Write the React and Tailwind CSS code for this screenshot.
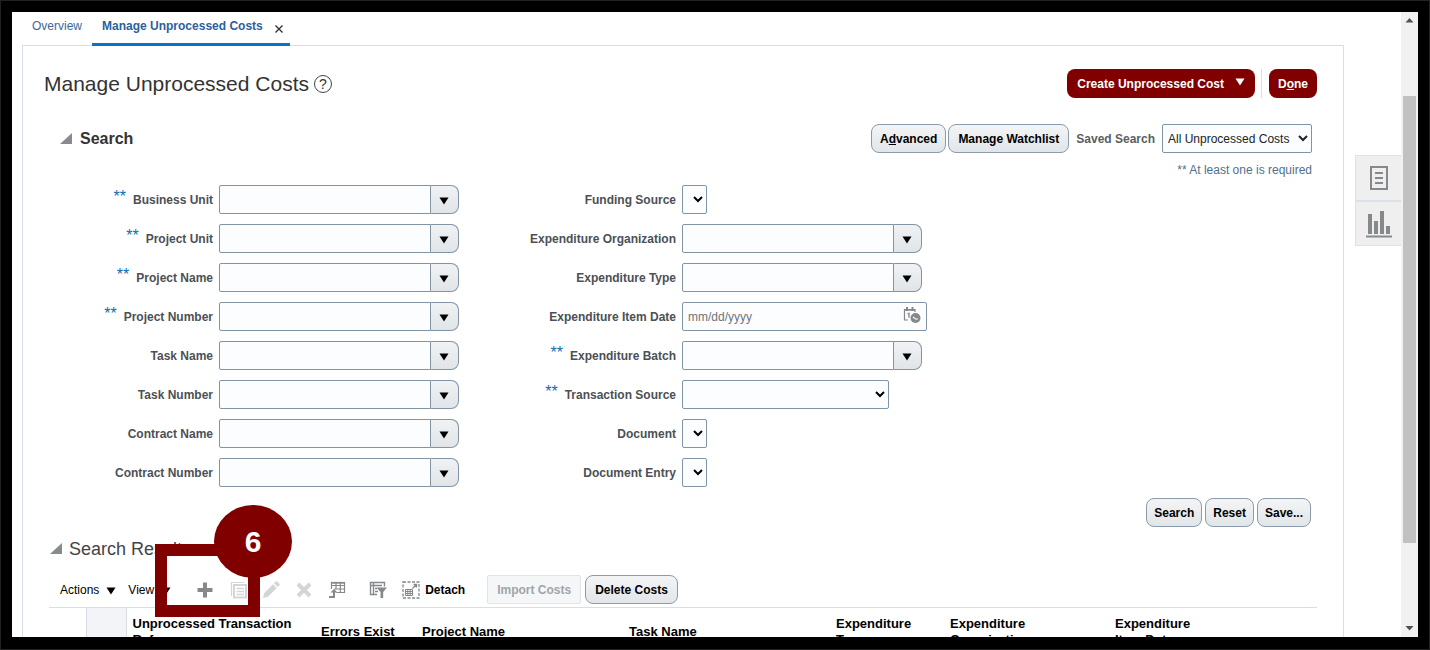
import React, { useState } from 'react';

const primaryFields = [
  { id: 'business-unit', label: 'Business Unit', required: true },
  { id: 'project-unit', label: 'Project Unit', required: true },
  { id: 'project-name', label: 'Project Name', required: true },
  { id: 'project-number', label: 'Project Number', required: true },
  { id: 'task-name', label: 'Task Name' },
  { id: 'task-number', label: 'Task Number' },
  { id: 'contract-name', label: 'Contract Name' },
  { id: 'contract-number', label: 'Contract Number' },
];

const secondaryFields = [
  { id: 'funding-source', label: 'Funding Source', type: 'select' },
  { id: 'expenditure-organization', label: 'Expenditure Organization' },
  { id: 'expenditure-type', label: 'Expenditure Type' },
  { id: 'expenditure-item-date', label: 'Expenditure Item Date', type: 'date' },
  { id: 'expenditure-batch', label: 'Expenditure Batch', required: true },
  { id: 'transaction-source', label: 'Transaction Source', type: 'wide-select', required: true },
  { id: 'document', label: 'Document', type: 'select' },
  { id: 'document-entry', label: 'Document Entry', type: 'select' },
];

const TriangleDown = ({ className = '' }) => (
  <svg viewBox="0 0 10 8" className={`h-2 w-[10px] shrink-0 ${className}`} fill="currentColor" aria-hidden="true">
    <path d="M0.5 0.5h9L5 7.5z" />
  </svg>
);

const DisclosureIcon = () => (
  <svg viewBox="0 0 12 12" className="h-3 w-3 shrink-0" fill="#878b8f" aria-hidden="true">
    <path d="M12 0v11H0z" />
  </svg>
);

const Button = ({ children, className = 'px-2', ...props }) => (
  <button
    type="button"
    className={`h-[29px] rounded-[8px] border border-[#8a9cab] bg-linear-to-b from-[#f3f4f5] to-[#e2e6e9] font-bold whitespace-nowrap text-black ${className}`}
    {...props}
  >
    {children}
  </button>
);

const Combo = ({ id, label }) => (
  <div className="flex h-[29px] w-[240px]">
    <input id={id} type="text" className="min-w-0 flex-1 rounded-l-[2px] border border-[#8094a5] bg-[#fbfdff] px-[5px]" />
    <button
      type="button"
      aria-label={`Open ${label}`}
      className="flex w-7 items-center justify-center rounded-r-[8px] border border-l-0 border-[#8094a5] bg-linear-to-b from-[#f0f2f4] to-[#e1e5e8] pt-[2px] pr-[2px] text-black"
    >
      <TriangleDown />
    </button>
  </div>
);

const DateField = ({ id }) => (
  <div className="flex h-[29px] w-[245px] items-center rounded-[2px] border border-[#8094a5] bg-[#fbfdff] px-[5px]">
    <input id={id} type="text" placeholder="mm/dd/yyyy" className="min-w-0 flex-1 bg-transparent placeholder:text-[#6f757a]" />
    <button type="button" aria-label="Select date" className="shrink-0 pb-[3px]">
      <svg viewBox="0 0 18 18" className="h-[18px] w-[18px]" fill="none" stroke="#85898c">
        <path d="M5 14H1.5V3.5H12V6" strokeWidth="1.2" />
        <path d="M4 1v4M9.500 1v4" strokeWidth="2" />
        <path d="M1.500 4h10.500" strokeWidth="1.500" />
        <path d="M4.500 8l1.500-.7v4.500" strokeWidth="1.300" />
        <circle cx="12.500" cy="12" r="5" fill="#85898c" stroke="none" />
        <path d="M10 11l2.500 2h2.500" stroke="#fff" strokeWidth="1.100" />
      </svg>
    </button>
  </div>
);

const Field = ({ field, labelWidth }) => {
  const { id, label, type, required } = field;
  return (
    <div className="flex items-center gap-[6px]">
      <label htmlFor={id} className={`${labelWidth} shrink-0 text-right leading-5 font-bold whitespace-nowrap text-[#4c5055]`}>
        {required && <span className="mr-[7px] align-[2px] text-base leading-none font-normal text-[#0f6bb3]">**</span>}
        {label}
      </label>
      {!type && <Combo id={id} label={label} />}
      {type === 'date' && <DateField id={id} />}
      {type === 'select' && (
        <select id={id} className="h-[29px] w-[25px] rounded-[2px] border border-[#8094a5] bg-[#fbfdff]">
          <option></option>
        </select>
      )}
      {type === 'wide-select' && (
        <select id={id} className="h-[29px] w-[207px] rounded-[2px] border border-[#8094a5] bg-[#fbfdff]">
          <option></option>
        </select>
      )}
    </div>
  );
};

const IconButton = ({ label, children, className = '', ...props }) => (
  <button type="button" aria-label={label} className={`h-[18px] w-[18px] shrink-0 ${className}`} {...props}>
    <svg viewBox="0 0 18 18" className="h-[18px] w-[18px]" fill="none" stroke="currentColor">
      {children}
    </svg>
  </button>
);

const Toolbar = () => (
  <div className="flex h-[29px] items-center pl-[11px] text-[#85898c]">
    <button type="button" className="flex items-center gap-[7px] text-black">
      Actions
      <TriangleDown className="mt-[2px]" />
    </button>
    <button type="button" className="ml-3 flex items-center gap-[7px] text-black">
      View
      <TriangleDown className="mt-[2px]" />
    </button>
    <IconButton label="Create" className="ml-[25px]">
      <path d="M9 1.500v15M1.500 9h15" strokeWidth="4" />
    </IconButton>
    <IconButton label="Duplicate" disabled className="ml-4 text-[#d3d5d7]">
      <path d="M1.500 15V1.500H14" strokeWidth="1.200" />
      <path d="M4 4h12v12.500H4z" strokeWidth="2" />
      <path d="M6.500 7.500h7.500M6.500 10.500h7.500M6.500 13.500h7.500" strokeWidth="1.500" />
    </IconButton>
    <IconButton label="Edit" disabled className="ml-[14px] text-[#d3d5d7]">
      <path d="M1 17l1.200-5L11 3.200l3.800 3.800L6 15.800zM12 2.200L13.600.6Q14.400 0 15.200.6L17.400 2.800Q18 3.600 17.400 4.400L15.800 6z" fill="currentColor" stroke="none" />
    </IconButton>
    <IconButton label="Delete" disabled className="ml-[15px] text-[#d3d5d7]">
      <path d="M3 3l12 12M15 3L3 15" strokeWidth="4" />
    </IconButton>
    <IconButton label="Export to Excel" className="ml-[15px]">
      <path d="M3.500 8V1.500h13V11.500H8.500M3.500 4.500h13M6 8h10.500M8 2v6M12.300 2v9.500" strokeWidth="1.200" />
      <path d="M3 1.800h14" strokeWidth="1.800" />
      <path d="M1 16h5V10.500" strokeWidth="2" />
      <path d="M2.500 11.500l3.500-3.500 3.500 3.500z" fill="currentColor" stroke="none" />
    </IconButton>
    <IconButton label="Query by Example" className="ml-[23px]">
      <path d="M8 13.500H1.500V1.500H15.500v4M1.500 4.500H13M4.500 2v11.500M6 7.500h2M6 10.500h3" strokeWidth="1.400" />
      <path d="M7.500 6.500h10.500l-3.800 4.500V17h-2.700v-6z" fill="currentColor" stroke="none" />
    </IconButton>
    <button type="button" className="ml-[15px] flex items-center gap-[5px] font-bold text-black">
      <svg viewBox="0 0 18 18" className="h-[18px] w-[18px] text-[#85898c]" fill="none" stroke="currentColor" aria-hidden="true">
        <path d="M1 1h16v16H1z" strokeWidth="1.300" strokeDasharray="3 1.500" />
        <path d="M3.500 8.500h7v6h-7zM3.500 10.500h7M3.500 12.500h7M5.800 9v5.500M8.200 9v5.500" strokeWidth="1" />
        <path d="M10.500 7.500l4-4M11.500 3.500h3v3" strokeWidth="1.300" />
      </svg>
      Detach
    </button>
    <button type="button" disabled className="ml-[22px] h-[29px] rounded-[2px] border border-[#dfe4e8] bg-[#f5f6f7] px-[9px] font-bold text-[#a2a5a8]">
      Import Costs
    </button>
    <Button className="ml-1 px-[9px]">Delete Costs</Button>
  </div>
);

const ResultsTable = () => (
  <table className="w-full table-fixed border-t border-[#d6dfe6] text-left text-[13px] leading-4 text-black">
    <thead>
      <tr className="h-12">
        <th className="w-[37px]"></th>
        <th className="w-10 border-x border-[#d6dfe6] bg-[#f2f4f8]"></th>
        <th className="w-[189px] px-[6px]">Unprocessed Transaction Reference</th>
        <th className="w-[101px] px-[6px]">Errors Exist</th>
        <th className="w-[207px] px-[6px]">Project Name</th>
        <th className="w-[207px] px-[6px]">Task Name</th>
        <th className="w-[114px] px-[6px]">Expenditure<br />Type</th>
        <th className="w-[165px] px-[6px]">Expenditure<br />Organization</th>
        <th className="px-[6px]">Expenditure<br />Item Date</th>
      </tr>
    </thead>
  </table>
);

const StepMarker = () => (
  <div className="pointer-events-none absolute top-[-32px] left-[111px] h-[112px] w-[137px]">
    <div className="absolute bottom-0 left-0 h-[73px] w-[105px] border-12 border-[#800000]" />
    <div className="absolute top-0 right-0 flex h-[73px] w-[78px] items-center justify-center rounded-[50%] bg-[#800000] text-[30px] leading-none font-bold text-white">
      6
    </div>
  </div>
);

const Scrollbar = () => (
  <div className="flex w-[17px] shrink-0 flex-col items-center bg-[#f1f1f1] text-[#505050]">
    <svg viewBox="0 0 17 17" className="h-[17px] w-[17px]" fill="currentColor" aria-hidden="true">
      <path d="M4.500 10.500h8l-4-4.500z" />
    </svg>
    <div className="flex w-full flex-1 flex-col px-[2px] pt-[2px]">
      <div className="h-[11%]" />
      <div className="h-[76%] bg-[#c1c1c1]" />
    </div>
    <svg viewBox="0 0 17 17" className="h-[17px] w-[17px]" fill="currentColor" aria-hidden="true">
      <path d="M4.500 6h8l-4 4.500z" />
    </svg>
  </div>
);

const SideRail = () => (
  <aside className="mt-[143px] w-[46px] shrink-0 self-start border border-r-0 border-[#dfe3e6] bg-[#efefef]">
    <button type="button" aria-label="Watchlist" className="flex h-11 w-full items-center justify-center">
      <svg viewBox="0 0 20 26" className="h-[26px] w-5" fill="none" stroke="#85898c" strokeWidth="2" aria-hidden="true">
        <path d="M2 2h16v22H2z" />
        <path d="M6 8h8M6 13h8M6 18h8" />
      </svg>
    </button>
    <button type="button" aria-label="Reports" className="flex h-[45px] w-full items-center justify-center border-t-2 border-[#dbe1e6]">
      <svg viewBox="0 0 28 28" className="h-7 w-7" fill="#85898c" aria-hidden="true">
        <path d="M3 4h4v20H3zM9 11h4v13H9zM15 1h4v23h-4zM21 16h4v8h-4zM1 25.500h26v2H1z" />
      </svg>
    </button>
  </aside>
);

const App = () => {
  const [savedSearch, setSavedSearch] = useState('All Unprocessed Costs');

  return (
    <div className="flex h-screen overflow-hidden border border-[#222] bg-black px-[11px] pt-[11px] pb-3 font-['Liberation_Sans',Arial,sans-serif] text-[12px] leading-4">
      <div className="flex min-w-0 flex-1 overflow-hidden bg-white">
        <div className="flex min-w-0 flex-1 flex-col pl-[10px]">
          <nav className="relative z-10 flex h-[34px] shrink-0">
            <a href="#overview" className="px-[10px] pt-[6px] text-[#3b6898]">Overview</a>
            <div className="flex gap-3 border-b-3 border-[#0572ce] pt-[6px] pr-[6px] pl-[10px]">
              <a href="#manage" className="font-bold text-[#2c5f9e]">Manage Unprocessed Costs</a>
              <button type="button" aria-label="Close tab" className="mt-[7px] h-2 w-[9px]">
                <svg viewBox="0 0 8 8" className="h-2 w-2" stroke="#333" strokeWidth="1.400" aria-hidden="true">
                  <path d="M0.500 0.500l7 7M7.500 0.500l-7 7" />
                </svg>
              </button>
            </div>
          </nav>

          <main className="-mt-px flex-1 border-x border-t border-[#d6dfe6] pt-[23px] pr-[26px] pl-[21px]">
            {/* Page header */}
            <header className="flex items-center">
              <h1 className="text-[21px] leading-7 text-[#333]">Manage Unprocessed Costs</h1>
              <button type="button" aria-label="Help" className="ml-[5px] h-[18px] w-[18px] rounded-full border border-[#444] text-[14px] leading-4 text-[#333]">
                ?
              </button>
              <div className="ml-auto flex items-center">
                <button type="button" className="flex h-[29px] items-center gap-[11px] rounded-[8px] bg-[#800000] px-[10px] font-bold text-white">
                  Create Unprocessed Cost
                  <TriangleDown className="mb-[3px]" />
                </button>
                <div className="mr-[7px] ml-[6px] h-[29px] border-l border-[#d6dfe6]" />
                <button type="button" className="h-[29px] rounded-[8px] bg-[#800000] px-[9px] font-bold text-white">
                  D<u>o</u>ne
                </button>
              </div>
            </header>

            {/* Search criteria */}
            <section className="mt-[26px]">
              <div className="flex items-center pr-[5px] pl-4">
                <DisclosureIcon />
                <h2 className="ml-2 text-base leading-6 font-bold text-[#333]">Search</h2>
                <div className="ml-auto flex items-center gap-[2px]">
                  <Button>A<u>d</u>vanced</Button>
                  <Button className="px-[9px]">Manage Watchlist</Button>
                  <label htmlFor="saved-search" className="mx-[5px] font-bold text-[#5a5e63]">Saved Search</label>
                  <select
                    id="saved-search"
                    value={savedSearch}
                    onChange={(e) => setSavedSearch(e.target.value)}
                    className="h-[29px] w-[150px] rounded-[2px] border border-[#8094a5] bg-[#fbfdff] pl-[1px] text-[#222]"
                  >
                    <option>All Unprocessed Costs</option>
                  </select>
                </div>
              </div>
              <p className="mt-[9px] pr-[5px] text-right text-[#52708a]">** At least one is required</p>

              <form className="mt-[7px] flex">
                <div className="flex flex-col gap-[10px]">
                  {primaryFields.map((field) => (
                    <Field key={field.id} field={field} labelWidth="w-[169px]" />
                  ))}
                </div>
                <div className="flex flex-col gap-[10px]">
                  {secondaryFields.map((field) => (
                    <Field key={field.id} field={field} labelWidth="w-[217px]" />
                  ))}
                </div>
              </form>

              <div className="mt-[11px] flex justify-end gap-[3px] pr-[6px]">
                <Button className="px-[7px]">Search</Button>
                <Button className="px-[7px]">Reset</Button>
                <Button className="px-[7px]">Save...</Button>
              </div>
            </section>

            {/* Results */}
            <section className="relative mt-[10px] pl-[5px]">
              <div className="flex items-center pl-px">
                <DisclosureIcon />
                <h2 className="ml-[7px] text-lg leading-6 text-[#444]">Search Results</h2>
              </div>
              <div className="mt-[14px] mb-[3px]">
                <Toolbar />
              </div>
              <ResultsTable />
              <StepMarker />
            </section>
          </main>
        </div>
        <div className="w-[11px] shrink-0" />
        <SideRail />
        <Scrollbar />
      </div>
    </div>
  );
};

export default App;
